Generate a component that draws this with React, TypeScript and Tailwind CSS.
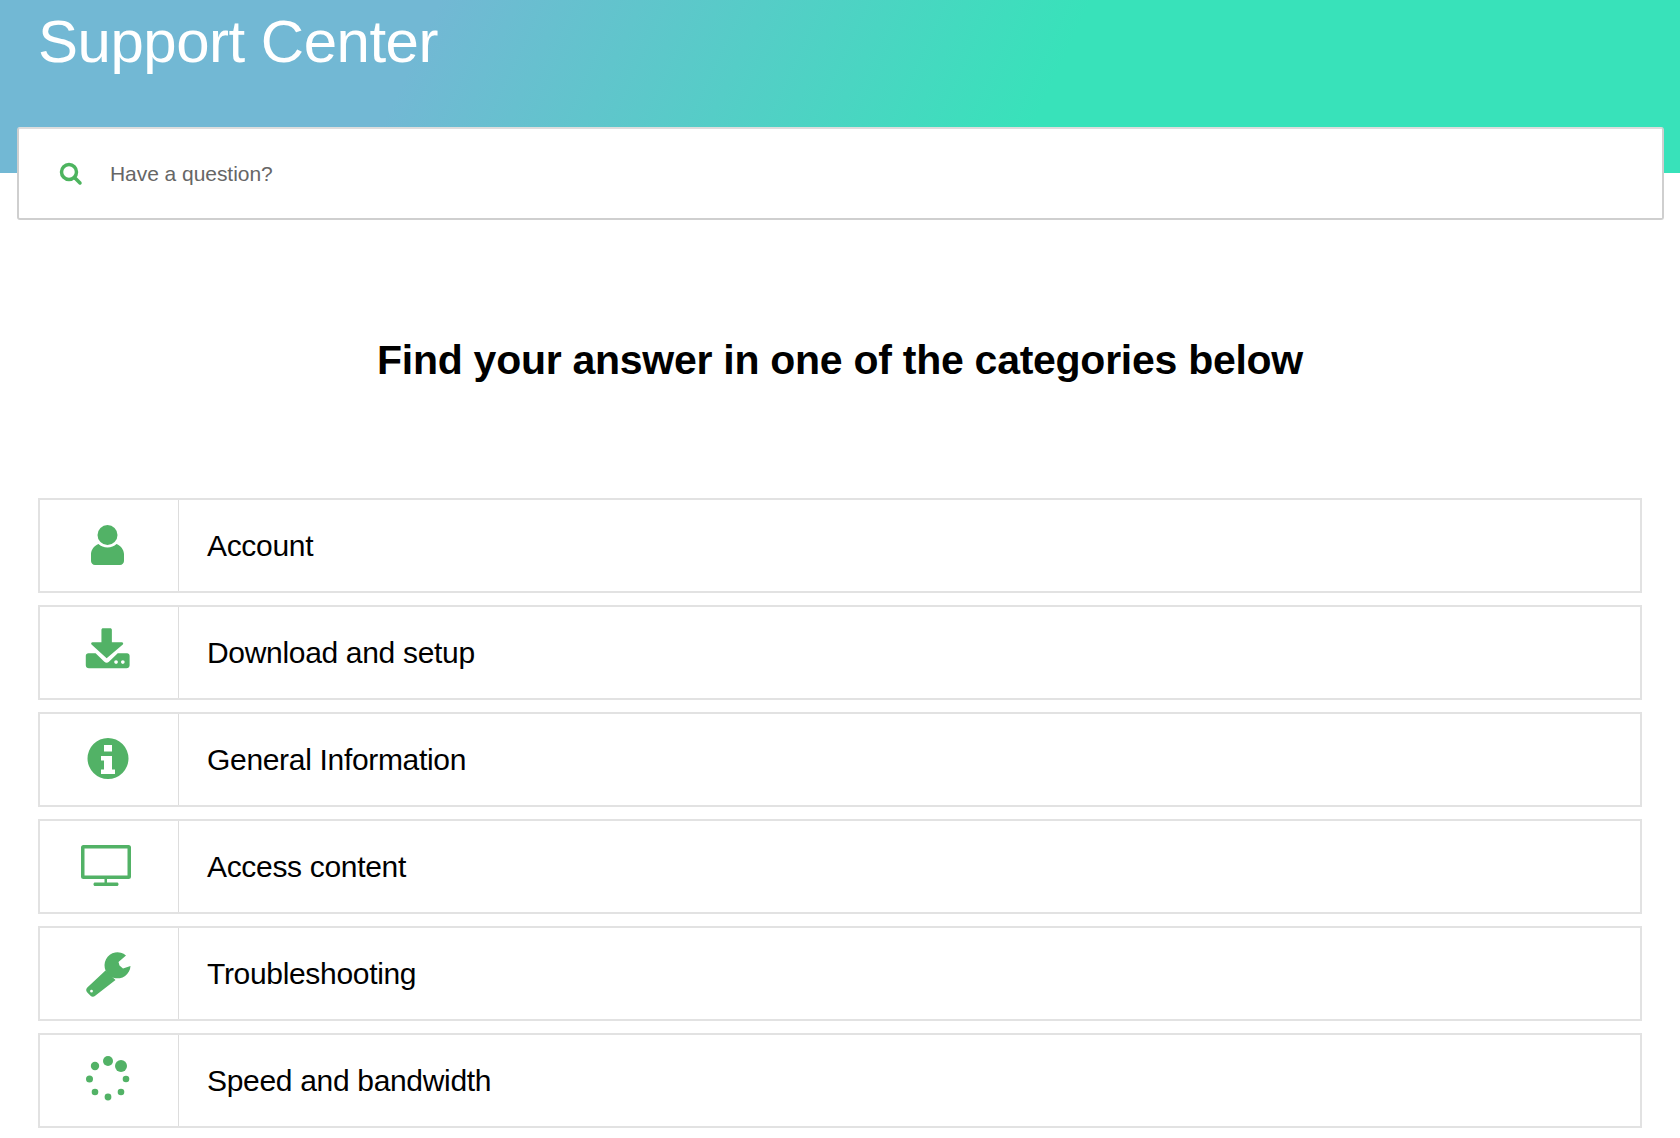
import type { ReactNode } from 'react';

const iconClass = 'fill-[#52b266]';

// category icons, drawn on a 60x60 box
const UserIcon = () => (
  <svg width="60" height="60" viewBox="1.500 0 60 60" className={iconClass}>
    <circle cx="30" cy="17" r="10" />
    <path d="M21 26c2.200 2.200 5.400 3.500 9 3.500s6.800-1.300 9-3.500c4.400 1.800 7.300 5.600 7.500 10v7c0 2.200-1.800 4-4 4h-25c-2.200 0-4-1.800-4-4v-7c.2-4.400 3.100-8.200 7.500-10z" />
  </svg>
);

const DownloadIcon = () => (
  <svg width="60" height="60" viewBox="3.500 1.700 57.500 60" preserveAspectRatio="none" className={iconClass}>
    <path d="M25 6.500c0-.8.700-1.500 1.500-1.500h7c.8 0 1.500.7 1.500 1.500V19h9.500c1.200 0 1.800 1.400 1 2.200L30 35 15.500 21.200c-.8-.8-.2-2.200 1-2.200H25z" />
    <path fillRule="evenodd" d="M10 32.500c0-1.400 1.100-2.500 2.500-2.500h6.900l8.400 8.400c1.300 1.300 3.100 1.300 4.400 0l8.400-8.400h8.900c1.400 0 2.500 1.100 2.500 2.500V42c0 1.700-1.300 3-3 3H13c-1.700 0-3-1.300-3-3zM39 37a1.800 1.800 0 1 0 0 3.600A1.800 1.800 0 0 0 39 37zm6.500 0a1.800 1.800 0 1 0 0 3.600 1.800 1.800 0 0 0 0-3.600z" />
  </svg>
);

const InfoIcon = () => (
  <svg width="60" height="60" viewBox="1 -1 60 60" className={iconClass}>
    <path fillRule="evenodd" d="M30 5a20.500 20.500 0 1 0 0 41 20.500 20.500 0 0 0 0-41zm-4 7h8v6.500h-8zm-3 11h11v13.500h3V41H23v-4.500h3V27.500h-3z" />
  </svg>
);

const MonitorIcon = () => (
  <svg width="60" height="60" viewBox="3 -1 60 60" className={iconClass}>
    <path fillRule="evenodd" d="M7.500 5h45A2.500 2.500 0 0 1 55 7.500v29a2.500 2.500 0 0 1-2.500 2.500H31v3.500h10c.8 0 1.500.7 1.500 1.500v.5c0 .8-.7 1.500-1.500 1.500H19c-.8 0-1.500-.7-1.500-1.500V44c0-.8.700-1.500 1.500-1.500h9.500V39H7.500A2.500 2.500 0 0 1 5 36.500v-29A2.500 2.500 0 0 1 7.500 5zM8.500 8.500v27h43v-27z" />
  </svg>
);

const WrenchIcon = () => (
  <svg width="60" height="60" viewBox="-1 -2 60 60" className={iconClass}>
    <path d="M46 7.500A13 13 0 1 0 50.500 18L43 20.500l-3.500-3-1-3.500z" />
    <path fillRule="evenodd" d="M25.500 22.500L7.300 39.500c-1.500 1.500-1.500 3.500 0 5l3.200 3.200c1.400 1.400 3.200 1.400 4.700 0L35.500 32zM11.500 41.800a1.400 1.400 0 1 0 0 2.800 1.400 1.400 0 0 0 0-2.800z" />
  </svg>
);

const SpinnerIcon = () => (
  <svg width="60" height="60" viewBox="1 0 60 60" className={iconClass}>
    <circle cx="30" cy="8" r="5" />
    <circle cx="43" cy="13" r="6" />
    <circle cx="17" cy="13" r="4.200" />
    <circle cx="11.500" cy="26" r="3.500" />
    <circle cx="48" cy="26" r="3.300" />
    <circle cx="17" cy="39" r="3.300" />
    <circle cx="43" cy="39" r="3.300" />
    <circle cx="30" cy="44" r="3.400" />
  </svg>
);

const categories: { label: string; icon: ReactNode }[] = [
  { label: 'Account', icon: <UserIcon /> },
  { label: 'Download and setup', icon: <DownloadIcon /> },
  { label: 'General Information', icon: <InfoIcon /> },
  { label: 'Access content', icon: <MonitorIcon /> },
  { label: 'Troubleshooting', icon: <WrenchIcon /> },
  { label: 'Speed and bandwidth', icon: <SpinnerIcon /> },
];

export default function App() {
  return (
    <div className="h-[1138px] overflow-hidden bg-white font-['Liberation_Sans',Arial,sans-serif]">
      {/* header */}
      <header className="h-[173px] bg-[linear-gradient(115deg,#72b8d4_0%,#72b8d4_25%,#38e2ba_62%,#38e2ba_100%)] px-[38px]">
        <h1 className="text-[60px] leading-[84px] tracking-[-0.5px] text-white">Support Center</h1>
      </header>

      {/* search */}
      <div className="ml-[17px] -mt-[46px] flex h-[93px] w-[1647px] items-center rounded-[3px] border-2 border-[#cfcfcf] border-t-[#dddddd] bg-white pl-[40px]">
        <svg width="24" height="24" viewBox="0 0 24 24" fill="none" stroke="#4db45f" strokeWidth="3.500" strokeLinecap="round">
          <circle cx="10" cy="10" r="7.500" />
          <path d="M16 16l5 5" />
        </svg>
        <span className="ml-[27px] text-[21px] tracking-[-0.05px] text-[#666666]">Have a question?</span>
      </div>

      <h2 className="mt-[114px] text-center text-[41px] leading-[52px] font-bold tracking-[-0.27px] text-black">
        Find your answer in one of the categories below
      </h2>

      {/* categories */}
      <div className="ml-[38px] mt-[112px] flex w-[1604px] flex-col gap-[12px]">
        {categories.map((c) => (
          <div key={c.label} className="flex h-[95px] border-2 border-[#e2e2e2]">
            <div className="flex w-[139px] items-start justify-center border-r border-[#dddddd] pt-[18px]">{c.icon}</div>
            <div className="flex flex-1 items-center pl-[28px] text-[30px] tracking-[-0.32px] text-black">{c.label}</div>
          </div>
        ))}
      </div>
    </div>
  );
}
